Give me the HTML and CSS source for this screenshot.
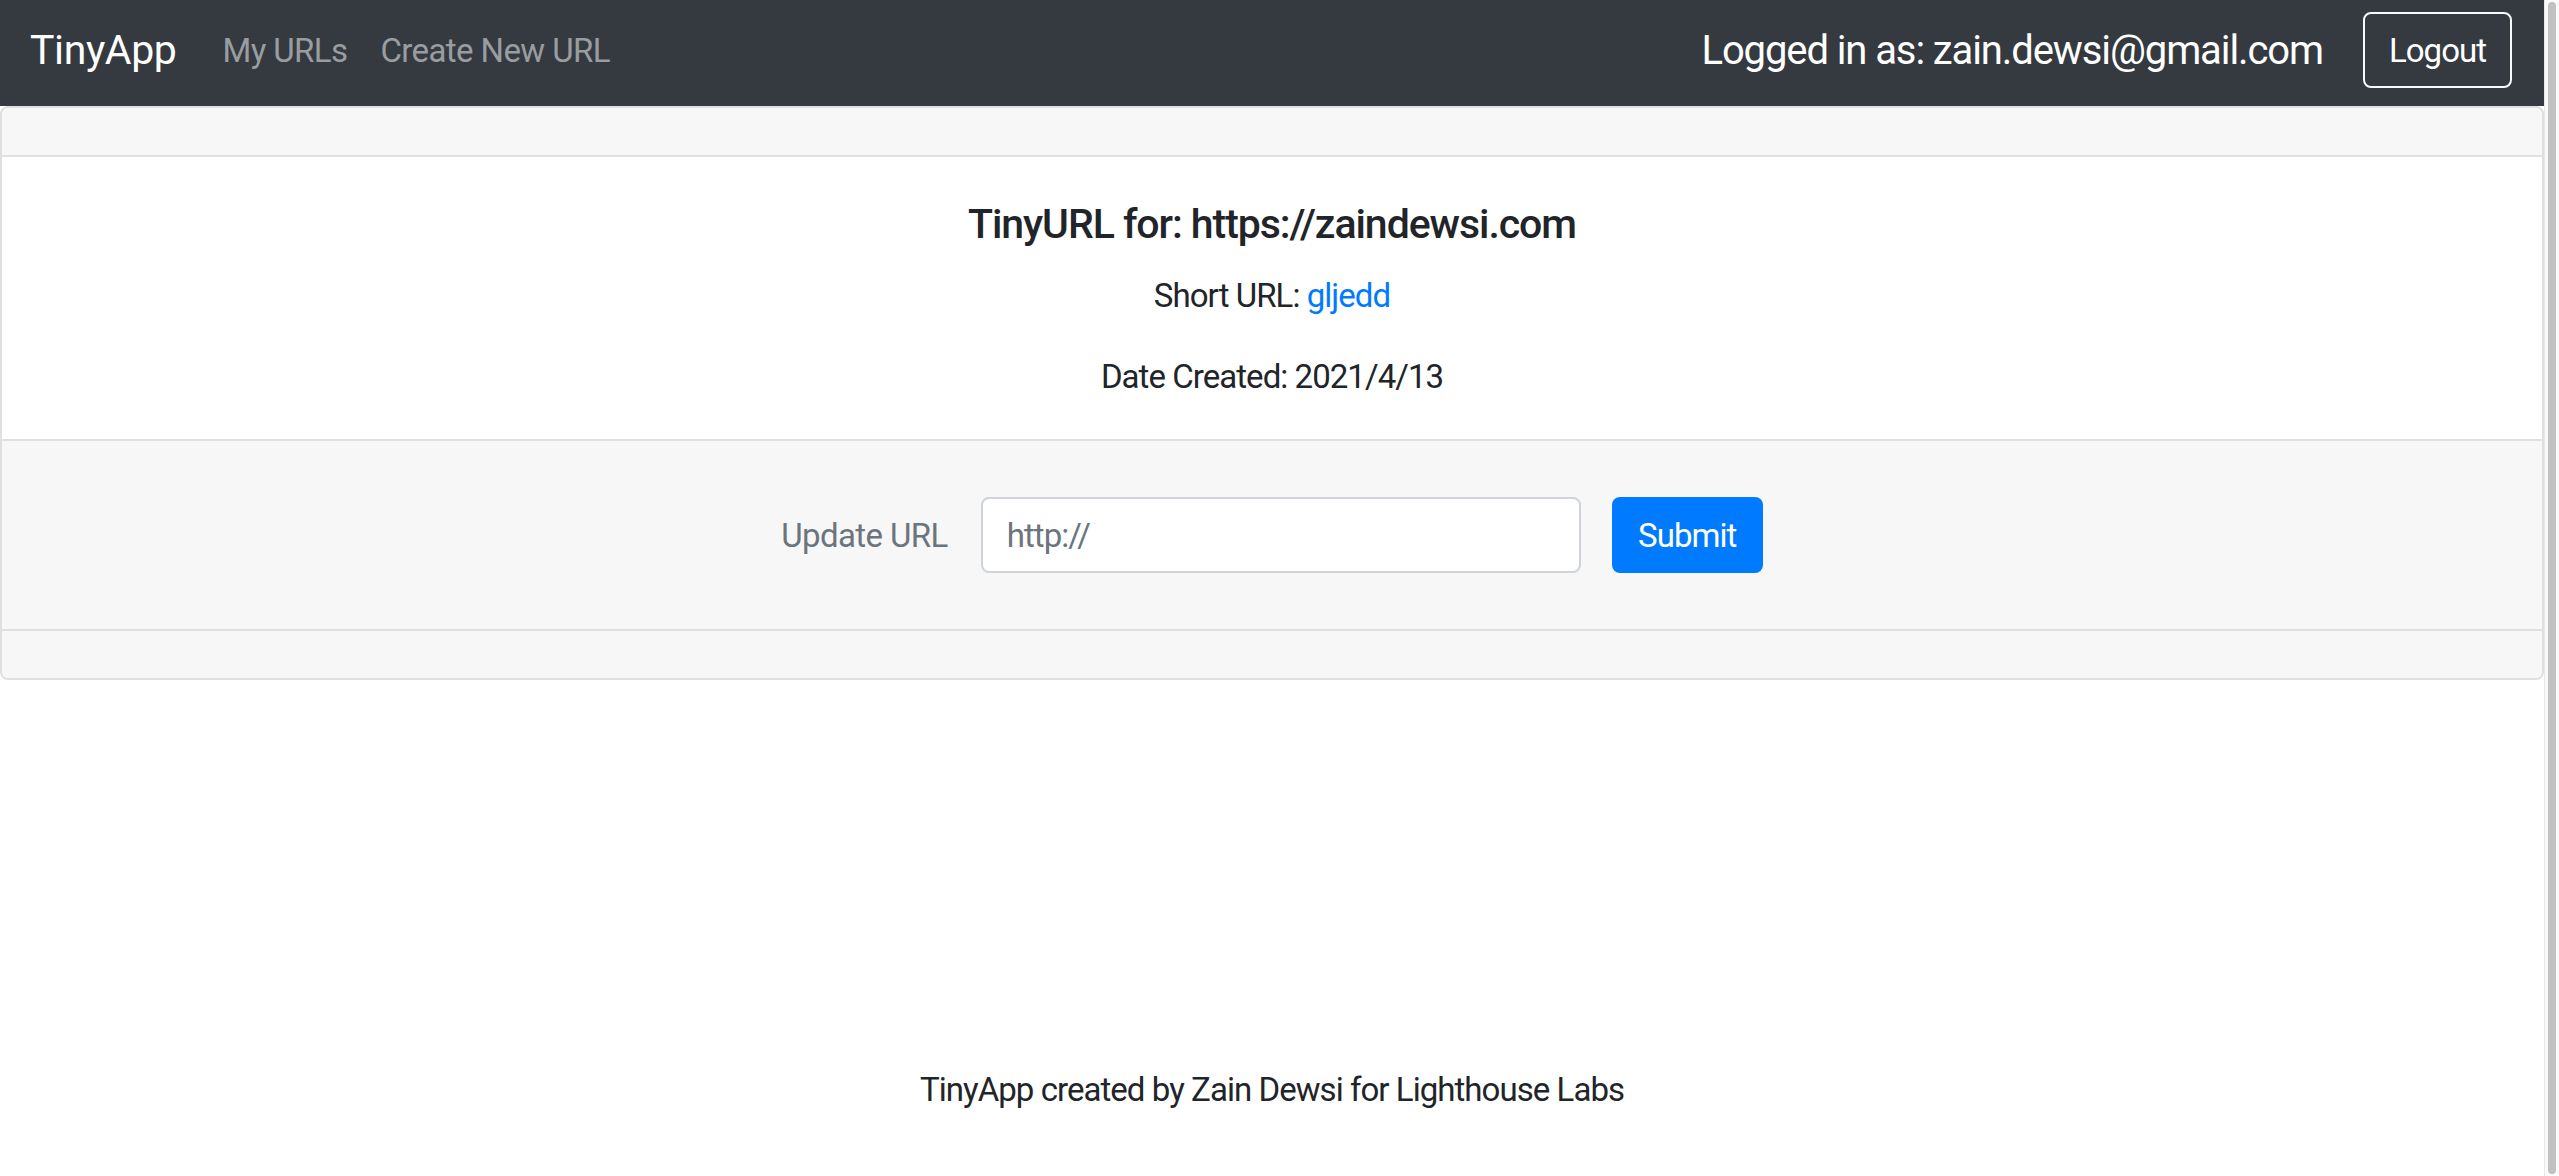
FILE: index.html
```html
<!DOCTYPE html>
<html lang="en">
<head>
<meta charset="utf-8">
<title>TinyApp</title>
<link rel="stylesheet" href="styles.css">
</head>
<body>
<div class="viewport">
  <div class="page">
    <nav class="navbar">
      <a class="brand" href="#">TinyApp</a>
      <ul class="nav-links">
        <li><a href="#">My URLs</a></li>
        <li><a href="#">Create New URL</a></li>
      </ul>
      <div class="nav-right">
        <span class="user">Logged in as: zain.dewsi@gmail.com</span>
        <button class="btn-logout" type="button">Logout</button>
      </div>
    </nav>
    <main class="card">
      <div class="card-header"></div>
      <div class="card-body">
        <h5 class="card-title">TinyURL for: https://zaindewsi.com</h5>
        <p class="card-text">Short URL: <a class="short-link" href="#">gljedd</a></p>
        <p class="card-text last">Date Created: 2021/4/13</p>
      </div>
      <div class="card-footer">
        <form class="update-form">
          <label class="form-label" for="longURL">Update URL</label>
          <input class="form-input" id="longURL" type="text" placeholder="http://">
          <button class="btn-submit" type="button">Submit</button>
        </form>
      </div>
      <div class="card-footer empty"></div>
    </main>
    <footer class="site-footer">TinyApp created by Zain Dewsi for Lighthouse Labs</footer>
  </div>
  <div class="scrollbar"><div class="scroll-thumb"></div></div>
</div>
</body>
</html>
```
FILE: styles.css
```css
html, body {
  margin: 0;
  padding: 0;
  background: #ffffff;
}

body {
  font-family: Roboto, "Liberation Sans", Arial, sans-serif;
  font-size: 33px;
  letter-spacing: -0.95px;
  color: #212529;
}

.viewport {
  display: flex;
  min-height: 100vh;
}

.page {
  flex: 1;
  min-width: 0;
  display: flex;
  flex-direction: column;
}

/* Navbar */
.navbar {
  display: flex;
  align-items: center;
  height: 76px;
  padding: 12px 32px 18px 30px;
  background: #343a40;
}

.brand {
  color: #ffffff;
  text-decoration: none;
  font-size: 41px;
  letter-spacing: -0.4px;
  margin-right: 46px;
}

.nav-links {
  display: flex;
  gap: 33px;
  list-style: none;
  margin: 0;
  padding: 0;
}

.nav-links a {
  color: #9a9da0;
  text-decoration: none;
  letter-spacing: -0.6px;
}

.nav-right {
  margin-left: auto;
  display: flex;
  align-items: center;
  gap: 40px;
}

.user {
  color: #ffffff;
  font-size: 40px;
  letter-spacing: -1.1px;
}

.btn-logout {
  box-sizing: border-box;
  width: 149px;
  height: 76px;
  padding: 0;
  background: transparent;
  border: 2px solid #f8f9fa;
  border-radius: 8px;
  color: #ffffff;
  font-family: inherit;
  font-size: 33px;
  letter-spacing: -0.95px;
}

/* Card */
.card {
  border: 2px solid #dfdfdf;
  border-radius: 8px;
  overflow: hidden;
}

.card-header {
  height: 47px;
  background: #f7f7f7;
  border-bottom: 2px solid #dfdfdf;
}

.card-body {
  padding: 43px 40px 38px;
  text-align: center;
  background: #ffffff;
}

.card-title {
  margin: 0 0 22px;
  font-size: 41px;
  line-height: 49px;
  font-weight: 500;
  letter-spacing: -1.05px;
}

.card-text {
  margin: 0 0 31px;
  line-height: 49.5px;
}

.card-text.last {
  margin-bottom: 0;
}

.short-link {
  color: #007bff;
  text-decoration: none;
}

.card-footer {
  background: #f7f7f7;
  border-top: 2px solid #dfdfdf;
  padding: 56px 20px;
}

.card-footer.empty {
  padding: 0;
  height: 47px;
}

.update-form {
  display: flex;
  justify-content: center;
  align-items: center;
  margin: 0;
}

.form-label {
  color: #6c757d;
  margin-right: 33px;
  letter-spacing: -0.6px;
}

.form-input {
  box-sizing: border-box;
  width: 600px;
  height: 76px;
  padding: 0 24px;
  border: 2px solid #ced4da;
  border-radius: 8px;
  background: #ffffff;
  font-family: inherit;
  font-size: 33px;
  letter-spacing: -0.95px;
  color: #495057;
  margin-right: 31px;
}

.form-input::placeholder {
  color: #6c757d;
  opacity: 1;
}

.btn-submit {
  width: 151px;
  height: 76px;
  border: none;
  border-radius: 8px;
  background: #007bff;
  color: #ffffff;
  font-family: inherit;
  font-size: 33px;
  letter-spacing: -0.95px;
}

/* Page footer */
.site-footer {
  margin-top: 385px;
  text-align: center;
  line-height: 49.5px;
}

/* Scrollbar strip */
.scrollbar {
  width: 14px;
  flex: none;
  background: #fafafa;
  border-left: 1px solid #e8e8e8;
  display: flex;
  justify-content: center;
  padding: 2px 0;
}

.scroll-thumb {
  width: 8px;
  background: #c1c1c1;
  border-radius: 4px;
}
```
